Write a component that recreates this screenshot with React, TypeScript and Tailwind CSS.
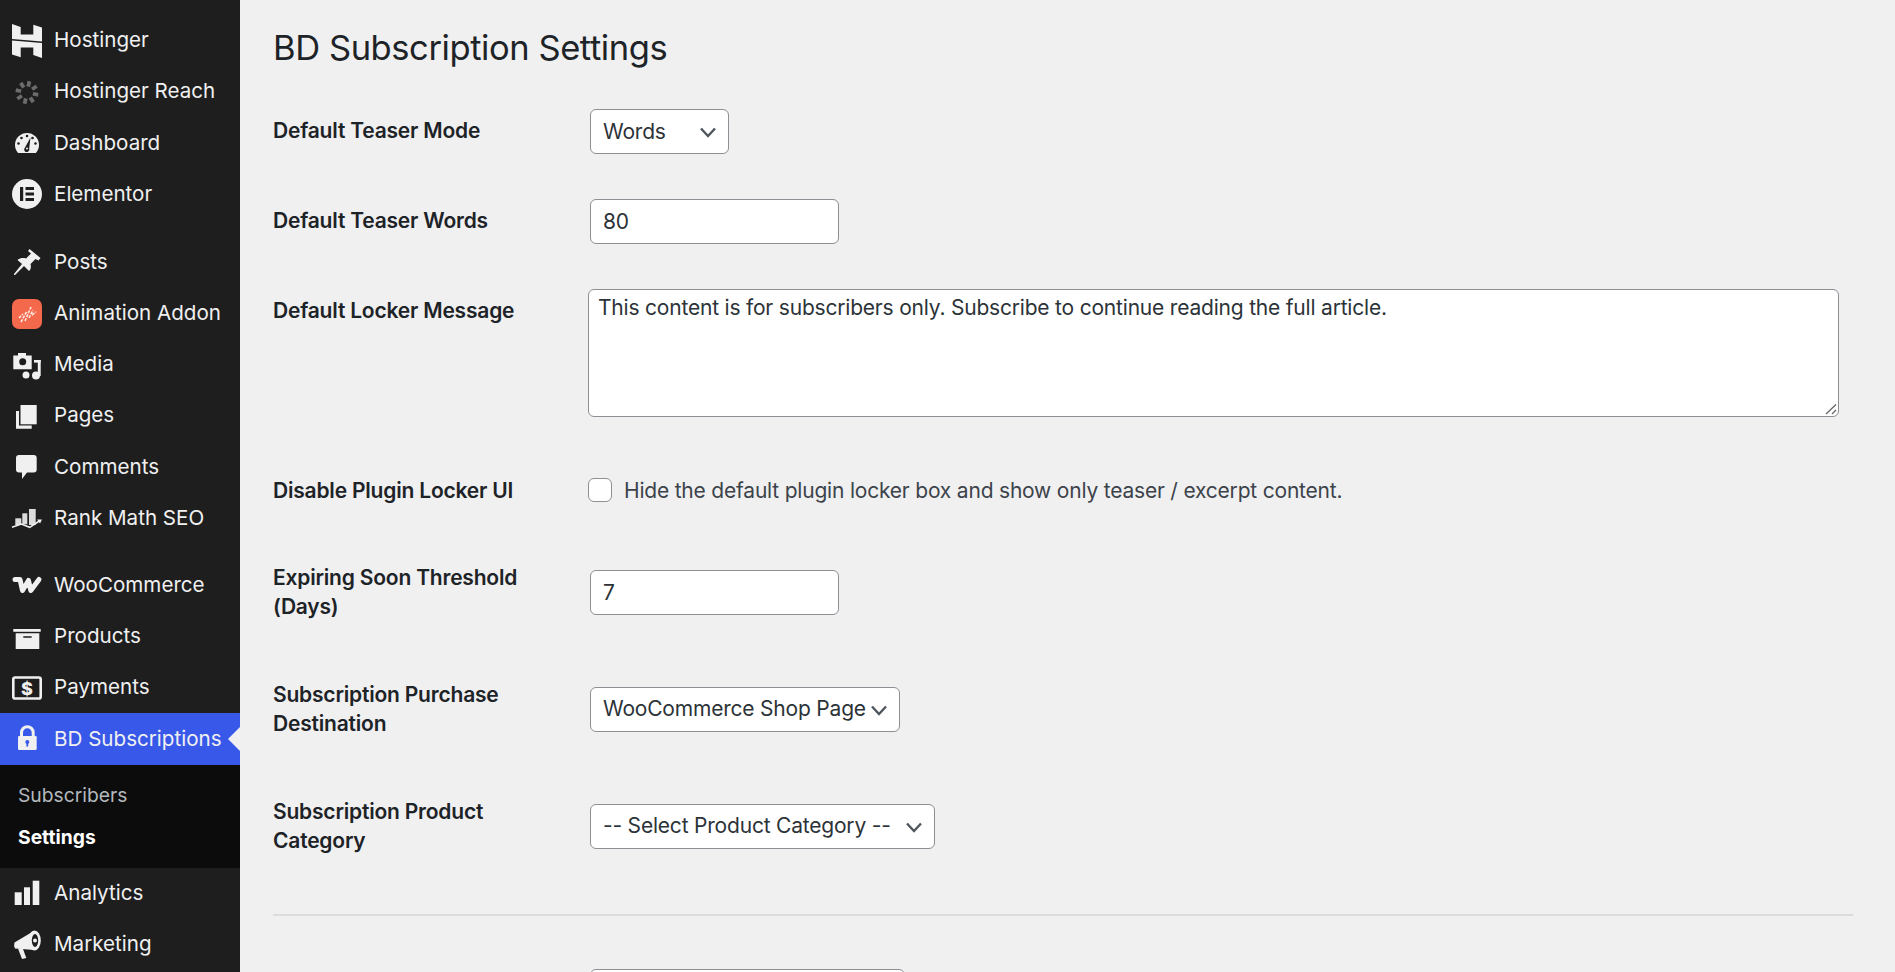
import React from "react";

function Hostinger() {
  return (
    <svg width="30" height="34" viewBox="0 0 30 34" fill="#f0f0f1">
      <path d="M0 0L8.7 3V10.5H21.3V0.7L30 3.5V17.5L0 15Z" />
      <path d="M30 34L21.3 31V23.5H8.7V33.3L0 30.5V16.5L30 19Z" />
    </svg>
  );
}

function Icon({ children }: { children: React.ReactNode }) {
  return (
    <svg width="30" height="30" viewBox="0 0 30 30" fill="#f0f0f1" className="overflow-visible">
      {children}
    </svg>
  );
}

const icons: Record<string, React.ReactNode> = {
  hostinger: <Hostinger />,
  reach: (
    <Icon>
      <g stroke="#6c6c6c" strokeWidth="3.8">
        {[12, 57, 102, 147, 192, 237, 282, 327].map((a) => (
          <line key={a} x1="15" y1="9.5" x2="15" y2="4" transform={`rotate(${a} 15 15.5)`} />
        ))}
      </g>
    </Icon>
  ),
  dashboard: (
    <Icon>
      <path d="M6.1 25A12 12 0 1 1 23.9 25Z" />
      <g fill="#1e1e1e">
        <circle cx="15" cy="8" r="1.3" />
        <circle cx="9.5" cy="10" r="1.3" />
        <circle cx="6.5" cy="15.5" r="1.3" />
        <circle cx="23.5" cy="15.5" r="1.3" />
        <circle cx="20.5" cy="10" r="1.3" />
        <path d="M18.5 9.5L17.2 20.5A2.6 2.6 0 1 1 13 19.5Z" />
      </g>
      <circle cx="15" cy="20.5" r="1" />
    </Icon>
  ),
  elementor: (
    <Icon>
      <circle cx="15" cy="15" r="15" />
      <g fill="#1e1e1e">
        <rect x="8" y="8" width="3.2" height="14" />
        <rect x="13.5" y="8" width="8.5" height="3" />
        <rect x="13.5" y="13.5" width="8.5" height="3" />
        <rect x="13.5" y="19" width="8.5" height="3" />
      </g>
    </Icon>
  ),
  posts: (
    <Icon>
      <path d="M17.5 2L28.5 11L26.5 13.5L23.5 12L18.5 17C19.5 20 18.5 22.5 17 24L12 19L3 28H2V27L10 17L5.5 13C8 11 11 10.5 14 11.5L19 6.5L16 4Z" />
    </Icon>
  ),
  animation: (
    <Icon>
      <rect width="30" height="30" rx="7" fill="#f4694c" />
      <g stroke="#ffe9e3" strokeWidth="1.6" strokeDasharray="3 1.2">
        <line x1="7" y1="19" x2="11" y2="15" />
        <line x1="9" y1="23" x2="15" y2="12" />
        <line x1="13" y1="22" x2="19" y2="8" />
        <line x1="17" y1="19" x2="21" y2="11" />
        <line x1="20" y1="16" x2="24" y2="13" />
      </g>
    </Icon>
  ),
  media: (
    <Icon>
      <path d="M6 3H14V5.5H19.7V19.3H1.3V5.5H6Z" />
      <circle cx="10.7" cy="11.7" r="3.5" fill="#1e1e1e" />
      <circle cx="14" cy="25" r="5" fill="#1e1e1e" />
      <circle cx="14" cy="25" r="3.5" />
      <rect x="22" y="10" width="6.7" height="2.6" />
      <rect x="25.8" y="10" width="2.9" height="16" />
      <circle cx="24" cy="25.5" r="4" />
    </Icon>
  ),
  pages: (
    <Icon>
      <path d="M4 10H7V24.5H19.7V27.7H4Z" />
      <path d="M8.5 4H24.7V23.3H8.5Z" />
    </Icon>
  ),
  comments: (
    <Icon>
      <path d="M7 3H21.7Q24.7 3 24.7 6V17.5Q24.7 20.5 21.7 20.5H15L10 27V20.5H7Q4 20.5 4 17.5V6Q4 3 7 3Z" />
    </Icon>
  ),
  rankmath: (
    <Icon>
      <g fill="#dcdcdc">
        <rect x="3.3" y="15.3" width="6" height="6.7" />
        <rect x="10.3" y="10.3" width="5" height="11" />
        <rect x="17" y="6" width="6.7" height="16" />
      </g>
      <polyline points="0,24.3 9.3,21 17.7,24.3 28,17.5" fill="none" stroke="#f0f0f1" strokeWidth="1.5" />
      <path d="M25 16.5L30 16.5L28 20.5Z" />
    </Icon>
  ),
  woo: (
    <Icon>
      <polyline
        points="3,9.5 8,9.5 10.5,20.5 16.5,10.5 18.8,20.5 27,9.5"
        fill="none"
        stroke="#f0f0f1"
        strokeWidth="5"
        strokeLinejoin="round"
        strokeLinecap="round"
      />
    </Icon>
  ),
  products: (
    <Icon>
      <rect x="1.3" y="7" width="27.4" height="2.8" />
      <path d="M3.7 11.3H27.3V27H3.7ZM11.3 14.3V15.8H19.7V14.3Z" fillRule="evenodd" />
    </Icon>
  ),
  payments: (
    <Icon>
      <rect x="1.3" y="4.5" width="27.4" height="21" rx="1.8" fill="none" stroke="#f0f0f1" strokeWidth="2.6" />
      <text x="15" y="21.5" textAnchor="middle" fontSize="18" fontWeight="800" fill="#f0f0f1" fontFamily="Inter, sans-serif">
        $
      </text>
    </Icon>
  ),
  lock: (
    <Icon>
      <path d="M9.5 13V8.5A5.8 5.8 0 0 1 21.2 8.5V13" fill="none" stroke="#f0f0f1" strokeWidth="3" />
      <rect x="6" y="12" width="18.7" height="14" rx="1.2" />
      <circle cx="15.3" cy="18" r="2" fill="#3858e9" />
      <rect x="14.4" y="18" width="1.8" height="4.5" fill="#3858e9" />
    </Icon>
  ),
  analytics: (
    <Icon>
      <rect x="2.7" y="14.3" width="7" height="12.7" />
      <rect x="12" y="9.3" width="6" height="17.7" />
      <rect x="20.7" y="2.7" width="6.6" height="24.3" />
    </Icon>
  ),
  marketing: (
    <Icon>
      <path d="M2.5 13.5L21 2.5L22.5 21L3 19.5Q1.5 16.5 2.5 13.5Z" />
      <path d="M6 19.5L11 20L14.3 29L10 30Z" />
      <ellipse cx="22.5" cy="11.5" rx="6.3" ry="10" />
      <ellipse cx="23" cy="11.5" rx="3.2" ry="6.5" fill="#1e1e1e" />
      <circle cx="23" cy="11.5" r="2" />
    </Icon>
  ),
};

function MenuItem({ icon, label, active }: { icon: string; label: string; active?: boolean }) {
  return (
    <div className={`relative flex h-[51.2px] items-center ${active ? "bg-[#3858e9]" : ""}`}>
      <span className="flex w-[54px] shrink-0 justify-center">{icons[icon]}</span>
      <span className="text-[20.6px] text-[#f0f0f1] whitespace-nowrap">{label}</span>
      {active && (
        <span className="absolute right-0 top-1/2 h-0 w-0 -translate-y-1/2 border-y-[12px] border-r-[12px] border-y-transparent border-r-[#f0f0f1]" />
      )}
    </div>
  );
}

function Sidebar() {
  return (
    <aside className="w-[240px] shrink-0 bg-[#1e1e1e] pt-[15px]">
      <MenuItem icon="hostinger" label="Hostinger" />
      <MenuItem icon="reach" label="Hostinger Reach" />
      <MenuItem icon="dashboard" label="Dashboard" />
      <MenuItem icon="elementor" label="Elementor" />
      <div className="h-[17px]" />
      <MenuItem icon="posts" label="Posts" />
      <MenuItem icon="animation" label="Animation Addon" />
      <MenuItem icon="media" label="Media" />
      <MenuItem icon="pages" label="Pages" />
      <MenuItem icon="comments" label="Comments" />
      <MenuItem icon="rankmath" label="Rank Math SEO" />
      <div className="h-[16px]" />
      <MenuItem icon="woo" label="WooCommerce" />
      <MenuItem icon="products" label="Products" />
      <MenuItem icon="payments" label="Payments" />
      <MenuItem icon="lock" label="BD Subscriptions" active />
      <div className="flex h-[103px] flex-col justify-center gap-[14px] bg-[#0c0c0c] pl-[18px] text-[19.3px] leading-[28px]">
        <span className="text-[#b4b9be]">Subscribers</span>
        <span className="font-bold text-white">Settings</span>
      </div>
      <MenuItem icon="analytics" label="Analytics" />
      <MenuItem icon="marketing" label="Marketing" />
    </aside>
  );
}

const fieldClass =
  "h-[45px] rounded-[6px] border-[1.5px] border-[#8c8f94] bg-white px-[12px] text-[21px] tracking-[-0.2px] text-[#2c3338] outline-none";

function Select({ value, width }: { value: string; width: string }) {
  return (
    <div className={`relative ${width}`}>
      <select className={`${fieldClass} w-full appearance-none`} defaultValue={value}>
        <option>{value}</option>
      </select>
      <svg
        className="pointer-events-none absolute right-[13px] top-[18px]"
        width="16"
        height="11"
        viewBox="0 0 16 11"
        fill="none"
        stroke="#50575e"
        strokeWidth="2.4"
      >
        <path d="M1 1.5L8 9L15 1.5" />
      </svg>
    </div>
  );
}

const labelClass = "text-[21px] leading-[29px] font-semibold tracking-[-0.2px] text-[#1d2327]";

function Row({ label, children }: { label: string; children: React.ReactNode }) {
  return (
    <div className="flex items-center">
      <div className={`mr-[17px] w-[300px] shrink-0 self-start py-[29.5px] ${labelClass}`}>{label}</div>
      <div className="py-[22.5px]">{children}</div>
    </div>
  );
}

export default function App() {
  return (
    <div className="flex h-[972px] w-[1895px] overflow-hidden bg-[#f0f0f1] font-['Inter',sans-serif]">
      <Sidebar />
      <main className="flex-1 pt-[24.5px] pr-[42px] pl-[33px]">
        <h1 className="mb-[17px] text-[34.5px] leading-[45px] font-normal tracking-[-0.42px] text-[#1d2327]">
          BD Subscription Settings
        </h1>

        <Row label="Default Teaser Mode">
          <Select value="Words" width="w-[139px]" />
        </Row>
        <Row label="Default Teaser Words">
          <input className={`${fieldClass} w-[249px]`} defaultValue="80" />
        </Row>
        <div className="flex items-start">
          <div className={`mr-[15px] w-[300px] shrink-0 py-[29.5px] ${labelClass}`}>Default Locker Message</div>
          <div className="relative flex-1 pt-[22.5px] pb-[28.5px]">
            <textarea
              className="block h-[128px] w-[1251px] resize-none rounded-[6px] border-[1.5px] border-[#8c8f94] bg-white px-[9px] py-[3px] text-[21px] leading-[29px] tracking-[-0.2px] text-[#2c3338] outline-none"
              defaultValue="This content is for subscribers only. Subscribe to continue reading the full article."
            />
            <svg
              className="pointer-events-none absolute bottom-[31px] left-[1237px]"
              width="12"
              height="12"
              viewBox="0 0 12 12"
              fill="none"
              stroke="#6b6b6b"
              strokeWidth="1.4"
            >
              <path d="M1 11L11 1.5M7 11L11 7" />
            </svg>
          </div>
        </div>
        <div className="flex h-[88px] items-start">
          <div className={`mr-[15px] w-[300px] shrink-0 pt-[30px] ${labelClass}`}>Disable Plugin Locker UI</div>
          <label className="flex items-center gap-[12px] pt-[30px] text-[21px] leading-[29px] tracking-[-0.2px] text-[#3c434a]">
            <input
              type="checkbox"
              className="h-[24px] w-[24px] appearance-none rounded-[6px] border-[1.5px] border-[#8c8f94] bg-white"
            />
            Hide the default plugin locker box and show only teaser / excerpt content.
          </label>
        </div>
        <Row label="Expiring Soon Threshold (Days)">
          <input className={`${fieldClass} w-[249px]`} defaultValue="7" />
        </Row>
        <Row label="Subscription Purchase Destination">
          <Select value="WooCommerce Shop Page" width="w-[310px]" />
        </Row>
        <Row label="Subscription Product Category">
          <Select value="-- Select Product Category --" width="w-[345px]" />
        </Row>

        <hr className="mt-[29px] h-[2px] border-0 bg-[#dcdcde]" />

        <div className="mt-[53px] ml-[317px] h-[45px] w-[315px] rounded-[6px] border-[1.5px] border-[#8c8f94] bg-white" />
      </main>
    </div>
  );
}
